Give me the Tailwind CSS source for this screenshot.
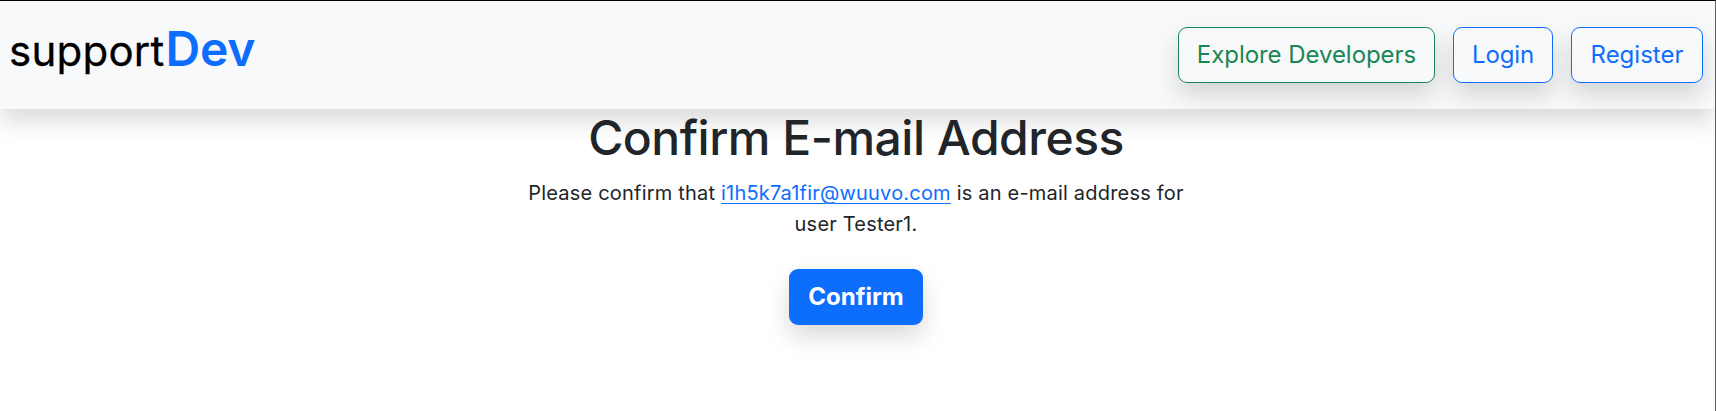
<!DOCTYPE html>
<html lang="en"><head><meta charset="utf-8"><title>supportDev</title>
<script src="https://cdn.jsdelivr.net/npm/@tailwindcss/browser@4"></script></head>
<body class="h-[411px] overflow-hidden border-t border-r border-t-black border-r-[#606060] bg-white font-['Inter',sans-serif] text-[#212529]">
<nav class="flex h-[108px] items-center justify-between bg-[#f8f9fb] pl-[9px] pr-3 shadow-[0_12px_24px_rgba(0,0,0,0.15)]">
<a class="pb-3 text-[42px] tracking-[0.25px] text-black [-webkit-text-stroke:0.3px_black]">support<span class="ml-px text-[48px] font-semibold tracking-[-0.3px] text-[#0d6efd] [-webkit-text-stroke:0]">Dev</span></a>
<div class="flex gap-[18px]">
<a class="flex h-14 w-[257px] items-center justify-center rounded-[9px] border border-[#198754] text-2xl tracking-[-0.05px] text-[#198754] shadow-[0_12px_24px_rgba(0,0,0,0.15)]">Explore Developers</a>
<a class="flex h-14 w-[100px] items-center justify-center rounded-[9px] border border-[#0d6efd] text-2xl tracking-[-0.1px] text-[#0d6efd] shadow-[0_12px_24px_rgba(0,0,0,0.15)]">Login</a>
<a class="flex h-14 w-[132px] items-center justify-center rounded-[9px] border border-[#0d6efd] text-2xl text-[#0d6efd] shadow-[0_12px_24px_rgba(0,0,0,0.15)]">Register</a>
</div></nav>
<main class="flex flex-col items-center pr-[3px] text-center">
<h1 class="text-[48px] leading-[58px] font-medium tracking-[-0.5px]">Confirm E-mail Address</h1>
<p class="mt-[11px] w-[680px] text-[20px] leading-[31px] tracking-[0.2px]">Please confirm that <a class="text-[#0d6efd] underline decoration-1 underline-offset-[3px]">i1h5k7a1fir@wuuvo.com</a> is an e-mail address for user Tester1.</p>
<button class="mt-[29px] h-14 w-[134px] rounded-[9px] bg-[#0d6efd] text-2xl font-bold text-white shadow-[0_12px_24px_rgba(0,0,0,0.15)]">Confirm</button>
</main></body></html>
